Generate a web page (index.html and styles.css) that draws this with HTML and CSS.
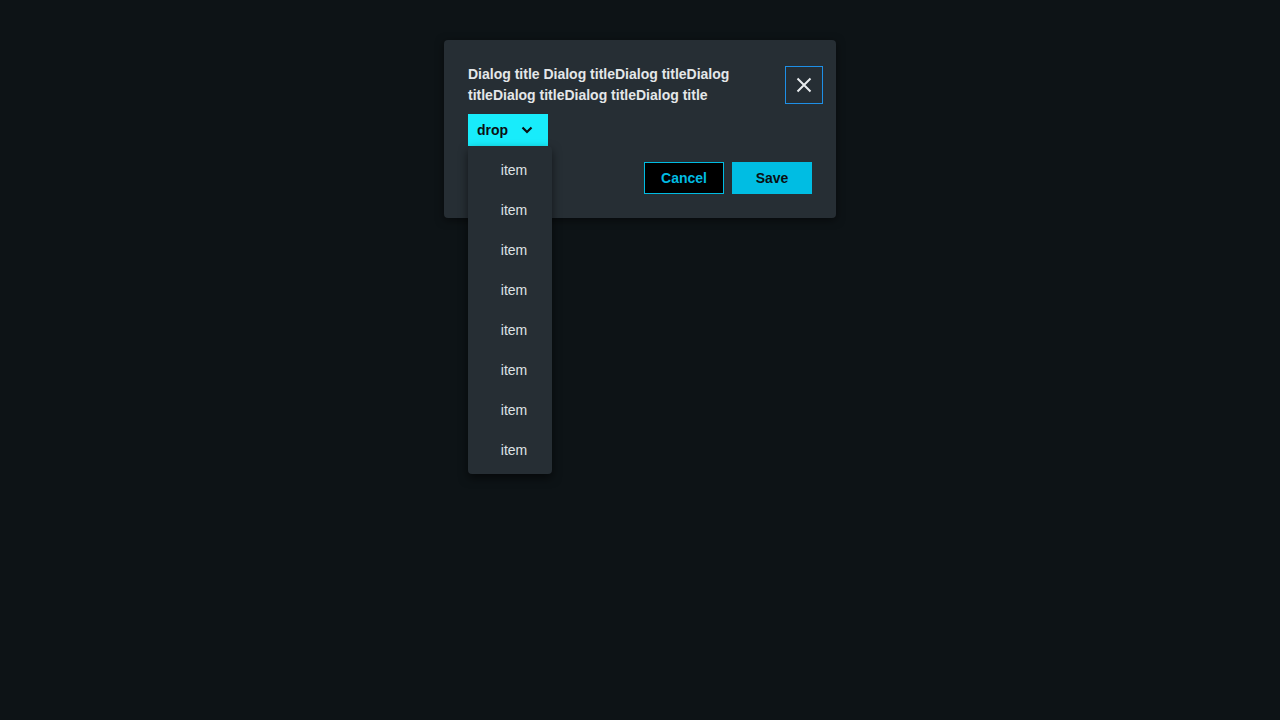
FILE: index.html
```html
<!DOCTYPE html>
<html>
<head>
<meta charset="utf-8">
<link rel="stylesheet" href="styles.css">
</head>
<body>
<div class="page">
  <div class="dialog">
    <div class="header">
      <div class="title">Dialog title Dialog titleDialog titleDialog titleDialog titleDialog titleDialog title</div>
      <button class="close" aria-label="close">
        <svg width="16" height="16" viewBox="0 0 16 16"><path d="M1.5 1.5L14.5 14.5M14.5 1.5L1.5 14.5" stroke="#e8ecee" stroke-width="2" fill="none"/></svg>
      </button>
    </div>
    <div class="drop-wrap">
      <button class="drop">drop
        <svg width="12" height="8" viewBox="0 0 12 8"><path d="M1.5 1.5L6 6L10.5 1.5" stroke="#0b0f12" stroke-width="2.2" fill="none"/></svg>
      </button>
      <div class="menu">
        <div class="item">item</div>
        <div class="item">item</div>
        <div class="item">item</div>
        <div class="item">item</div>
        <div class="item">item</div>
        <div class="item">item</div>
        <div class="item">item</div>
        <div class="item">item</div>
      </div>
    </div>
    <div class="footer">
      <button class="btn cancel">Cancel</button>
      <button class="btn save">Save</button>
    </div>
  </div>
</div>
</body>
</html>
```
FILE: styles.css
```css
html, body {
  margin: 0;
  padding: 0;
  background: #0d1316;
  font-family: "Liberation Sans", Arial, sans-serif;
}
.page {
  width: 1280px;
  height: 720px;
  display: flex;
  justify-content: center;
  padding-top: 40px;
  box-sizing: border-box;
}
.dialog {
  width: 392px;
  height: 178px;
  box-sizing: border-box;
  background: #262e34;
  border-radius: 4px;
  padding: 24px 24px 24px 24px;
  box-shadow: 0 2px 8px rgba(0,0,0,0.5);
}
.header {
  display: flex;
  align-items: flex-start;
}
.title {
  flex: 1;
  font-size: 14px;
  font-weight: 700;
  line-height: 21px;
  color: #e4e7e9;
  padding-right: 16px;
}
.close {
  width: 38px;
  height: 38px;
  margin-top: 2px;
  margin-right: -11px;
  background: transparent;
  border: 1px solid #1e8fe6;
  padding: 0;
  display: flex;
  align-items: center;
  justify-content: center;
  cursor: pointer;
}
.drop-wrap {
  position: relative;
  margin-top: 8px;
  height: 32px;
}
.drop {
  height: 32px;
  width: 80px;
  background: #18ecfb;
  border: none;
  padding: 0 0 0 9px;
  display: flex;
  align-items: center;
  gap: 13px;
  font-family: "Liberation Sans", Arial, sans-serif;
  font-size: 14px;
  font-weight: 700;
  color: #0b0f12;
}
.menu {
  position: absolute;
  top: 32px;
  left: 0;
  width: 84px;
  padding: 4px 0;
  background: #262e34;
  border-radius: 4px;
  box-shadow: 0 4px 10px rgba(0,0,0,0.55);
  z-index: 10;
}
.item {
  height: 40px;
  line-height: 40px;
  text-align: center;
  padding-left: 8px;
  font-size: 14px;
  color: #dfe3e6;
}
.footer {
  display: flex;
  justify-content: flex-end;
  gap: 8px;
  margin-top: 16px;
}
.btn {
  width: 80px;
  height: 32px;
  font-family: "Liberation Sans", Arial, sans-serif;
  font-size: 14px;
  font-weight: 700;
  cursor: pointer;
}
.cancel {
  background: #000;
  color: #00bce2;
  border: 1px solid #00bce2;
}
.save {
  background: #00bde3;
  color: #0b0f12;
  border: none;
}
```
